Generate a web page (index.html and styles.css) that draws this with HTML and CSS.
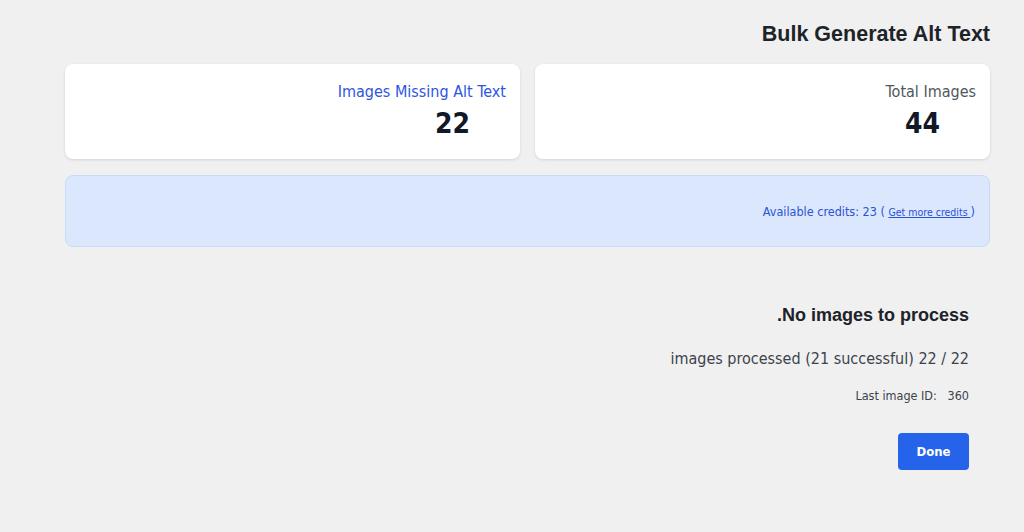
FILE: index.html
```html
<!DOCTYPE html>
<html lang="en">
<head>
<meta charset="utf-8">
<title>Bulk Generate Alt Text</title>
<link rel="stylesheet" href="styles.css">
</head>
<body>
<div class="wrap">
  <h1 class="title">Bulk Generate Alt Text</h1>
  <div class="stats">
    <div class="card">
      <div class="card-label card-label--blue">Images Missing Alt Text</div>
      <div class="card-value">22</div>
    </div>
    <div class="card">
      <div class="card-label">Total Images</div>
      <div class="card-value">44</div>
    </div>
  </div>
  <div class="credits">
    <span class="credits-text">Available credits: 23 ( <a class="credits-link" href="#">Get more credits </a>)</span>
  </div>
  <div class="progress">
    <h2 class="progress-title">.No images to process</h2>
    <p class="progress-count">images processed (21 successful) 22 / 22</p>
    <p class="progress-last">Last image ID:&nbsp;&nbsp; 360</p>
    <button class="btn" type="button">Done</button>
  </div>
</div>
</body>
</html>
```
FILE: styles.css
```css
html, body {
  margin: 0;
  padding: 0;
}
body {
  background: #f0f0f1;
  font-family: "DejaVu Sans Condensed", "DejaVu Sans", sans-serif;
  color: #1d2327;
  width: 1024px;
  height: 532px;
  overflow: hidden;
}
.wrap {
  margin: 0 34px 0 65px;
  padding-top: 22px;
}
.title {
  margin: 0;
  text-align: right;
  font-family: "Liberation Sans", Arial, sans-serif;
  font-weight: 700;
  font-size: 21.5px;
  line-height: 24px;
  color: #1d2327;
}
.stats {
  display: grid;
  grid-template-columns: 1fr 1fr;
  gap: 15px;
  margin-top: 18px;
}
.card {
  background: #fff;
  border-radius: 8px;
  box-shadow: 0 1px 3px rgba(0, 0, 0, 0.12);
  height: 95px;
  box-sizing: border-box;
  padding: 18px 14px 0 14px;
  display: flex;
  flex-direction: column;
  align-items: flex-end;
}
.card-label {
  font-size: 16px;
  line-height: 20px;
  color: #50575e;
}
.card-label--blue {
  color: #2f55e0;
}
.card-value {
  margin-top: 5px;
  margin-right: 36px;
  font-size: 28px;
  line-height: 34px;
  font-weight: 700;
  color: #111827;
}
.credits {
  margin-top: 16px;
  height: 72px;
  box-sizing: border-box;
  background: #dbe7fd;
  border: 1px solid #c8dafa;
  border-radius: 8px;
  display: flex;
  align-items: center;
  justify-content: flex-end;
  padding: 0 14px 0 14px;
}
.credits-text {
  font-size: 12.5px;
  color: #2c52d6;
}
.credits-link {
  font-size: 10.5px;
  color: #2c52d6;
  text-decoration: underline;
}
.progress {
  padding: 0 21px 0 0;
  margin-top: 57px;
  display: flex;
  flex-direction: column;
  align-items: flex-end;
}
.progress-title {
  margin: 0;
  font-family: "Liberation Sans", Arial, sans-serif;
  font-weight: 700;
  font-size: 18px;
  line-height: 22px;
  color: #1d2327;
}
.progress-count {
  margin: 22px 0 0 0;
  font-size: 16px;
  line-height: 22px;
  color: #3c434a;
}
.progress-last {
  margin: 18px 0 0 0;
  font-size: 12.5px;
  line-height: 16px;
  color: #3c434a;
}
.btn {
  margin-top: 29px;
  width: 71px;
  height: 37px;
  border: 0;
  border-radius: 4px;
  background: #2563eb;
  color: #fff;
  font-family: "DejaVu Sans Condensed", "DejaVu Sans", sans-serif;
  font-weight: 700;
  font-size: 13px;
  cursor: pointer;
}
```
